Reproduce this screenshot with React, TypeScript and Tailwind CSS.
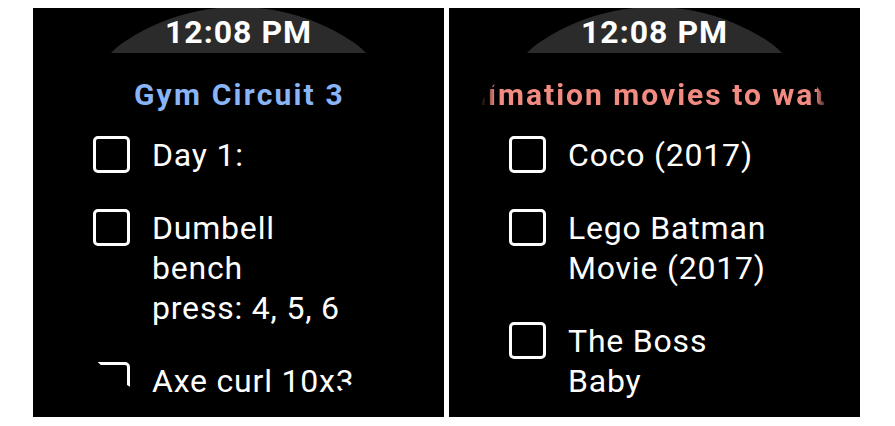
import React from 'react';

interface WatchScreenProps {
  title: string;
  accent: string;
  marquee?: boolean;
  rows: string[][];
}

// rounded checkbox outline, nothing checked in either list
function CheckBox() {
  return <div className="mt-[1px] h-[37px] w-[37px] shrink-0 rounded-[5px] border-[3px] border-white" />;
}

function WatchScreen({ title, accent, marquee, rows }: WatchScreenProps) {
  return (
    <div className="flex h-[409px] w-[411px] shrink-0 items-center justify-center overflow-hidden bg-black">
      {/* round display */}
      <div className="flex h-[411px] w-[411px] shrink-0 flex-col overflow-hidden rounded-full bg-black">
        <div className="flex h-[46px] justify-center bg-[radial-gradient(circle_at_50%_172px,#2b2b2b_179px,transparent_179.5px)] pt-[9px]">
          <span className="text-[32px] font-bold leading-[32px] tracking-[1px] text-white">12:08 PM</span>
        </div>

        {marquee ? (
          <div className="mx-auto mt-[24px] w-[348px] overflow-hidden [mask-image:linear-gradient(to_right,transparent,black_14px,black_334px,transparent)]">
            <div className={`ml-[-33px] whitespace-nowrap text-[30px] font-bold leading-[36px] tracking-[2px] ${accent}`}>
              {title}
            </div>
          </div>
        ) : (
          <div className={`mt-[24px] pl-[2px] text-center text-[30px] font-bold leading-[36px] tracking-[2.2px] ${accent}`}>
            {title}
          </div>
        )}

        <div className="mt-[22px] flex flex-col gap-[33px] pl-[60px]">
          {rows.map((lines, i) => (
            <div key={i} className="flex items-start gap-[22px]">
              <CheckBox />
              <div className="text-[32px] leading-[40px] tracking-[0.8px] text-white">
                {lines.map((line) => (
                  <div key={line} className="whitespace-nowrap">
                    {line}
                  </div>
                ))}
              </div>
            </div>
          ))}
        </div>
      </div>
    </div>
  );
}

export default function App() {
  return (
    <div className="flex h-[426px] w-[895px] items-start gap-[5px] bg-white pl-[33px] pt-[8px] [font-family:Roboto,'Liberation_Sans',sans-serif]">
      <WatchScreen
        title="Gym Circuit 3"
        accent="text-[#8ab4f8]"
        rows={[['Day 1:'], ['Dumbell', 'bench', 'press: 4, 5, 6'], ['Axe curl 10x3']]}
      />
      <WatchScreen
        title="Animation movies to watch"
        accent="text-[#f28b82]"
        marquee
        rows={[['Coco (2017)'], ['Lego Batman', 'Movie (2017)'], ['The Boss', 'Baby']]}
      />
    </div>
  );
}
